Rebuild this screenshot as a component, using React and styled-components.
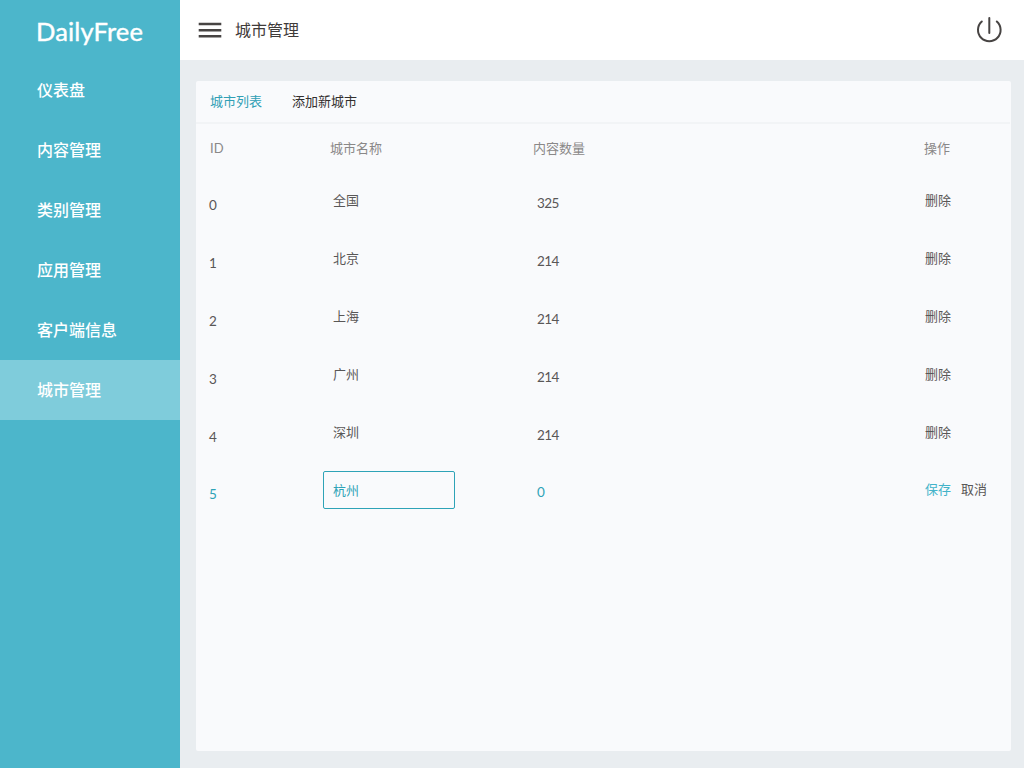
import React from 'react';
import styled, { createGlobalStyle } from 'styled-components';

const GlobalStyle = createGlobalStyle`
  * { box-sizing: border-box; }
  body {
    margin: 0;
    background: #e9edf0;
    font-family: "Noto Sans CJK SC", sans-serif;
    color: #595757;
  }
`;

const Layout = styled.div`
  display: grid;
  grid-template-columns: 180px 1fr;
  height: 768px;
  overflow: hidden;
`;

const Sidebar = styled.aside`
  background: #4cb6cb;
`;

const Logo = styled.div`
  height: 60px;
  padding-left: 36px;
  font: 400 25.5px/62px Lato, sans-serif;
  letter-spacing: 0.15px;
  color: #fff;
  -webkit-text-stroke: 0.4px #fff;
  white-space: nowrap;
`;

const NavItem = styled.a`
  display: block;
  height: 60px;
  padding-left: 37px;
  font-size: 16px;
  font-weight: 500;
  line-height: 58px;
  color: #fff;
  background: ${(p) => (p.$active ? '#7fccdb' : 'transparent')};
`;

const Main = styled.main`
  display: flex;
  flex-direction: column;
  min-width: 0;
`;

const TopBar = styled.header`
  display: flex;
  align-items: center;
  height: 60px;
  padding: 0 21px 0 18px;
  background: #fff;
`;

const Title = styled.h1`
  flex: 1;
  height: 60px;
  margin: 0 0 0 13px;
  font-size: 16px;
  font-weight: 400;
  line-height: 58px;
  color: #3f3b3a;
`;

const Panel = styled.section`
  height: 670px;
  margin: 21px 13px 0 16px;
  border-radius: 2px;
  background: #f9fafc;
`;

const Tabs = styled.nav`
  display: flex;
  gap: 30px;
  height: 43px;
  margin-right: 1px;
  padding-left: 14px;
  border-bottom: 2px solid #f2f4f6;
`;

const Tab = styled.a`
  font-size: 13px;
  line-height: 39px;
  color: ${(p) => (p.$active ? '#309fb5' : '#332f2e')};
`;

const Row = styled.div`
  display: grid;
  grid-template-columns: 127px 203px 388px 1fr;
  align-items: center;
  height: ${(p) => (p.$editing ? 56 : 58)}px;
  font-size: 13px;
  line-height: 20px;
  color: ${(p) => (p.$editing ? '#2ea3b7' : '#595757')};
`;

const HeadRow = styled(Row)`
  height: 48px;
  color: #8a8888;
`;

const HeadCell = styled.span`
  padding-left: ${(p) => p.$inset}px;
  font-family: ${(p) => (p.$latin ? 'Lato, sans-serif' : 'inherit')};
`;

const NumberCell = styled.span`
  padding: ${(p) => p.$drop}px 0 0 ${(p) => p.$inset}px;
  font-family: Lato, sans-serif;
  font-size: 13.5px;
  letter-spacing: -0.6px;
`;

const NameCell = styled.span`
  padding: 0 0 2px 10px;
`;

const NameInput = styled.input`
  width: 132px;
  height: 38px;
  padding: 0 9px 2px;
  border: 1px solid #2ea3b7;
  border-radius: 2px;
  outline: none;
  background: transparent;
  font: inherit;
  color: inherit;
`;

const Actions = styled.span`
  display: flex;
  gap: 10px;
  padding: 0 0 2px 11px;
`;

const Action = styled.a`
  color: ${(p) => (p.$primary ? '#43b3c9' : '#595757')};
`;

const MenuIcon = () => (
  <svg width="24" height="18" viewBox="0 0 24 18" fill="none" stroke="#474443" strokeWidth="2.4">
    <path d="M.7 3H23.3M.7 9.2H23.3M.7 15.3H23.3" />
  </svg>
);

const PowerIcon = () => (
  <svg width="28" height="30" viewBox="0 0 28 30" fill="none" stroke="#474443" strokeWidth="2" strokeLinecap="round">
    <path d="M14.3 3V18" />
    <path d="M6.8 6.5A11.3 11.3 0 1 0 21.8 6.5" />
  </svg>
);

const navigation = ['仪表盘', '内容管理', '类别管理', '应用管理', '客户端信息', '城市管理'];

const cities = [
  { name: '全国', count: 325 },
  { name: '北京', count: 214 },
  { name: '上海', count: 214 },
  { name: '广州', count: 214 },
  { name: '深圳', count: 214 },
  { name: '杭州', count: 0, editing: true },
];

export default function App() {
  return (
    <Layout>
      <GlobalStyle />
      <Sidebar>
        <Logo>DailyFree</Logo>
        {navigation.map((label) => (
          <NavItem key={label} $active={label === '城市管理'}>{label}</NavItem>
        ))}
      </Sidebar>
      <Main>
        <TopBar>
          <MenuIcon />
          <Title>城市管理</Title>
          <PowerIcon />
        </TopBar>
        <Panel>
          <Tabs>
            <Tab $active>城市列表</Tab>
            <Tab>添加新城市</Tab>
          </Tabs>
          <HeadRow>
            <HeadCell $inset={14} $latin>ID</HeadCell>
            <HeadCell $inset={7}>城市名称</HeadCell>
            <HeadCell $inset={7}>内容数量</HeadCell>
            <HeadCell $inset={10}>操作</HeadCell>
          </HeadRow>
          {cities.map(({ name, count, editing }, id) => (
            <Row key={name} $editing={editing}>
              <NumberCell $inset={13} $drop={8}>{id}</NumberCell>
              {editing ? <NameInput defaultValue={name} /> : <NameCell>{name}</NameCell>}
              <NumberCell $inset={11} $drop={4}>{count}</NumberCell>
              <Actions>
                {editing ? (
                  <>
                    <Action $primary>保存</Action>
                    <Action>取消</Action>
                  </>
                ) : (
                  <Action>删除</Action>
                )}
              </Actions>
            </Row>
          ))}
        </Panel>
      </Main>
    </Layout>
  );
}
